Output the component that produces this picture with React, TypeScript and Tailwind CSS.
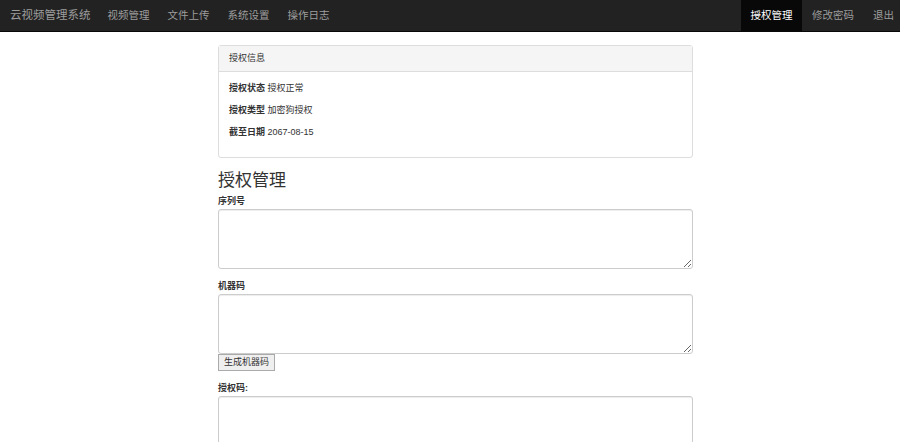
import React from 'react';

const FONT = '"Liberation Sans", "Noto Sans CJK SC", sans-serif';

const LEFT_NAV = ['视频管理', '文件上传', '系统设置', '操作日志'];

const TA = 'block w-full h-[60px] border border-[#ccc] rounded-[3px] bg-white shadow-[inset_0_1px_1px_rgba(0,0,0,0.075)] outline-none';
const LBL = 'block text-[9px] font-bold text-[#333] leading-[12px] mb-[2px]';

export default function App() {
  return (
    <div className="w-[900px] h-[442px] overflow-hidden bg-white" style={{ fontFamily: FONT }}>
      <nav className="h-[32px] bg-[#222] border-b border-[#080808] flex items-stretch">
        <div className="flex items-center pl-[10px] pr-[8px] text-[11.5px] text-[#9d9d9d]">云视频管理系统</div>
        {LEFT_NAV.map((n) => (
          <div key={n} className="flex items-center px-[9px] text-[10.5px] text-[#9d9d9d]">{n}</div>
        ))}
        <div className="flex-1" />
        <div className="flex items-center px-[9.5px] text-[10.5px] text-white bg-[#080808]">授权管理</div>
        <div className="flex items-center pl-[10px] pr-[9px] text-[10.5px] text-[#9d9d9d]">修改密码</div>
        <div className="flex items-center pl-[10px] pr-[6px] text-[10.5px] text-[#9d9d9d]">退出</div>
      </nav>

      <div className="w-[475px] ml-[218px] pt-[13px]">
        <div className="border border-[#ddd] rounded-[3px] h-[113px]">
          <div className="h-[26px] bg-[#f5f5f5] border-b border-[#ddd] flex items-center px-[10px] text-[9px] text-[#333]">
            授权信息
          </div>
          <div className="px-[10px] pt-[10px] text-[9px] text-[#333] leading-[12px] flex flex-col gap-[10px]">
            <div><b>授权状态</b> 授权正常</div>
            <div><b>授权类型</b> 加密狗授权</div>
            <div><b>截至日期</b> 2067-08-15</div>
          </div>
        </div>

        <h3 className="text-[17px] text-[#333] leading-[20px] mt-[13px] mb-[4px]">授权管理</h3>

        <div className="mb-[11px]">
          <label className={LBL}>序列号</label>
          <textarea className={TA} />
        </div>
        <div className="mb-[11px]">
          <label className={LBL}>机器码</label>
          <textarea className={TA} />
          <button className="block h-[17px] px-[5px] text-[9px] text-[#333] bg-[#efefef] border border-[#aaa] leading-[15px]">生成机器码</button>
        </div>
        <div>
          <label className={LBL}>授权码:</label>
          <textarea className={TA} />
        </div>
      </div>
    </div>
  );
}
